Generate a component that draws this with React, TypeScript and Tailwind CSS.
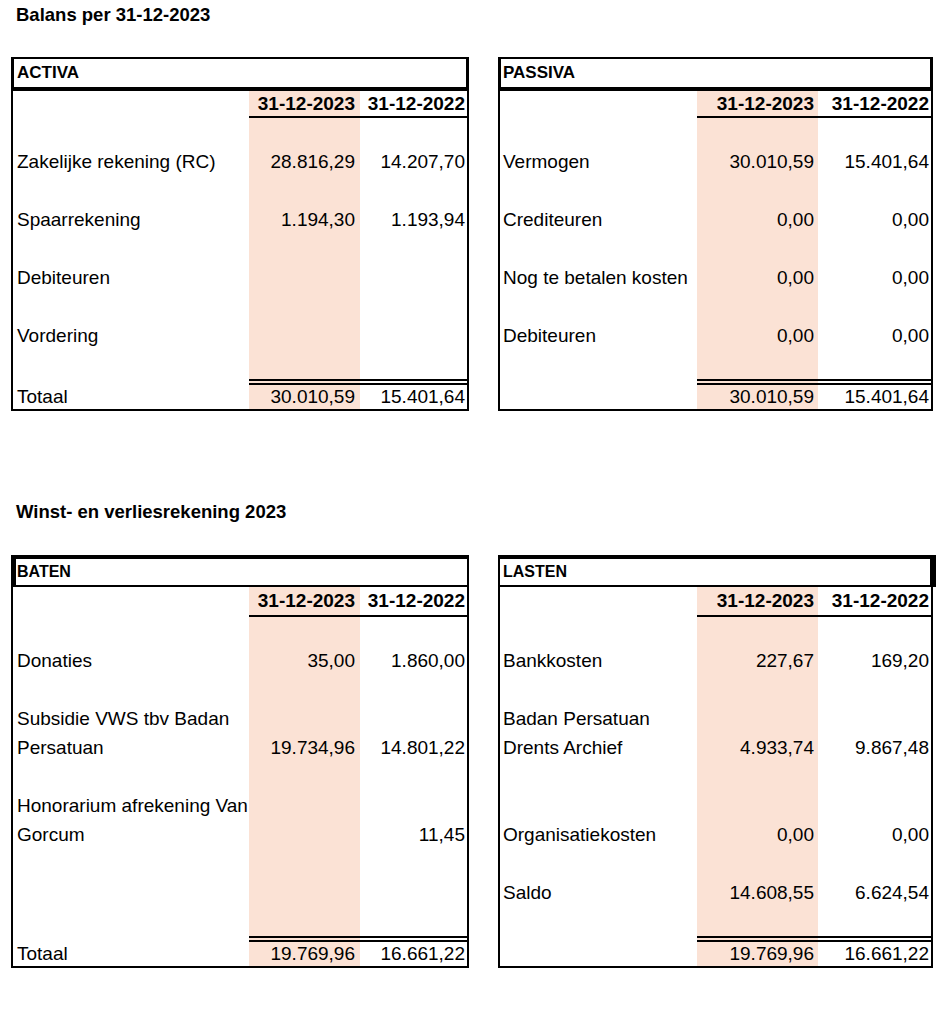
type Row = [string, string, string];

type Sheet = {
  title: string;
  width: string;
  cols: string;
  header: string;
  headerText: string;
  dateRow: string;
  padA: string;
  padB: string;
  padLabel: string;
  rows: Row[];
  total: Row;
};

const SHADE = "bg-[#fbe2d5]";

const activa: Sheet = {
  title: "ACTIVA",
  width: "w-[458px]",
  cols: "grid-cols-[236px_111px_107px]",
  header: "h-[34px] border-t-2 border-b-4 border-x-[3px] pl-[3px] leading-[28px]",
  headerText: "text-[17px]",
  dateRow: "h-[27px] leading-[25px]",
  padA: "pr-[5px]",
  padB: "pr-[2px]",
  padLabel: "pl-1",
  rows: [
    ["", "", ""],
    ["Zakelijke rekening (RC)", "28.816,29", "14.207,70"],
    ["", "", ""],
    ["Spaarrekening", "1.194,30", "1.193,94"],
    ["", "", ""],
    ["Debiteuren", "", ""],
    ["", "", ""],
    ["Vordering", "", ""],
    ["", "", ""],
  ],
  total: ["Totaal", "30.010,59", "15.401,64"],
};

const passiva: Sheet = {
  title: "PASSIVA",
  width: "w-[435px]",
  cols: "grid-cols-[197px_121px_113px]",
  header: "h-[34px] border-t-2 border-b-4 border-x-[3px] pl-[2px] leading-[28px]",
  headerText: "text-[17px]",
  dateRow: "h-[27px] leading-[25px]",
  padA: "pr-[4px]",
  padB: "pr-[2px]",
  padLabel: "pl-[3px]",
  rows: [
    ["", "", ""],
    ["Vermogen", "30.010,59", "15.401,64"],
    ["", "", ""],
    ["Crediteuren", "0,00", "0,00"],
    ["", "", ""],
    ["Nog te betalen kosten", "0,00", "0,00"],
    ["", "", ""],
    ["Debiteuren", "0,00", "0,00"],
    ["", "", ""],
  ],
  total: ["", "30.010,59", "15.401,64"],
};

const baten: Sheet = {
  title: "BATEN",
  width: "w-[458px]",
  cols: "grid-cols-[236px_111px_107px]",
  header: "h-[32px] border-t-4 border-b-2 border-l-[5px] border-r-2 pl-[1px] leading-[26px]",
  headerText: "text-[16px]",
  dateRow: "h-[30px] leading-[28px]",
  padA: "pr-[5px]",
  padB: "pr-[2px]",
  padLabel: "pl-1",
  rows: [
    ["", "", ""],
    ["Donaties", "35,00", "1.860,00"],
    ["", "", ""],
    ["Subsidie VWS tbv Badan", "", ""],
    ["Persatuan", "19.734,96", "14.801,22"],
    ["", "", ""],
    ["Honorarium afrekening Van", "", ""],
    ["Gorcum", "", "11,45"],
    ["", "", ""],
    ["", "", ""],
    ["", "", ""],
  ],
  total: ["Totaal", "19.769,96", "16.661,22"],
};

const lasten: Sheet = {
  title: "LASTEN",
  width: "w-[435px]",
  cols: "grid-cols-[197px_121px_113px]",
  header: "h-[32px] border-t-4 border-b-2 border-l-2 border-r-[6px] -mr-[3px] pl-[3px] leading-[26px]",
  headerText: "text-[16px]",
  dateRow: "h-[30px] leading-[28px]",
  padA: "pr-[4px]",
  padB: "pr-[2px]",
  padLabel: "pl-[3px]",
  rows: [
    ["", "", ""],
    ["Bankkosten", "227,67", "169,20"],
    ["", "", ""],
    ["Badan Persatuan", "", ""],
    ["Drents Archief", "4.933,74", "9.867,48"],
    ["", "", ""],
    ["", "", ""],
    ["Organisatiekosten", "0,00", "0,00"],
    ["", "", ""],
    ["Saldo", "14.608,55", "6.624,54"],
    ["", "", ""],
  ],
  total: ["", "19.769,96", "16.661,22"],
};

const Statement = ({ s }: { s: Sheet }) => (
  <div className={`${s.width} text-black`}>
    <div className={`${s.header} border-black font-bold ${s.headerText}`}>{s.title}</div>
    <div className={`grid ${s.cols} border-x-2 border-b-2 border-black text-[19px]`}>
      <div className={`${s.dateRow} border-b-2 border-transparent`} />
      <div className={`${s.dateRow} ${SHADE} ${s.padA} border-b-2 border-black text-right font-bold`}>
        31-12-2023
      </div>
      <div className={`${s.dateRow} ${s.padB} border-b-2 border-black text-right font-bold`}>31-12-2022</div>

      {s.rows.map(([label, a, b], i) => (
        <div key={i} className="contents">
          <div className={`h-[29px] leading-[29px] whitespace-nowrap ${s.padLabel}`}>{label}</div>
          <div className={`h-[29px] leading-[29px] text-right ${SHADE} ${s.padA}`}>{a}</div>
          <div className={`h-[29px] leading-[29px] text-right ${s.padB}`}>{b}</div>
        </div>
      ))}

      <div className={`h-[30px] leading-[24px] border-t-[6px] border-transparent ${s.padLabel}`}>
        {s.total[0]}
      </div>
      <div className={`h-[30px] leading-[24px] border-t-[6px] border-double border-black text-right ${SHADE} ${s.padA}`}>
        {s.total[1]}
      </div>
      <div className={`h-[30px] leading-[24px] border-t-[6px] border-double border-black text-right ${s.padB}`}>
        {s.total[2]}
      </div>
    </div>
  </div>
);

export default function App() {
  return (
    <div className="min-h-[1030px] w-[950px] bg-white pl-[11px] pt-[3px] font-['Liberation_Sans',Arial,sans-serif] text-black">
      <h1 className="pl-[5px] text-[18.5px] font-bold leading-6">Balans per 31-12-2023</h1>
      <div className="mt-[30px] flex gap-[29px]">
        <Statement s={activa} />
        <Statement s={passiva} />
      </div>

      <h2 className="mt-[89px] pl-[5px] text-[18.5px] font-bold leading-6">Winst- en verliesrekening 2023</h2>
      <div className="mt-[31px] flex gap-[29px]">
        <Statement s={baten} />
        <Statement s={lasten} />
      </div>
    </div>
  );
}
